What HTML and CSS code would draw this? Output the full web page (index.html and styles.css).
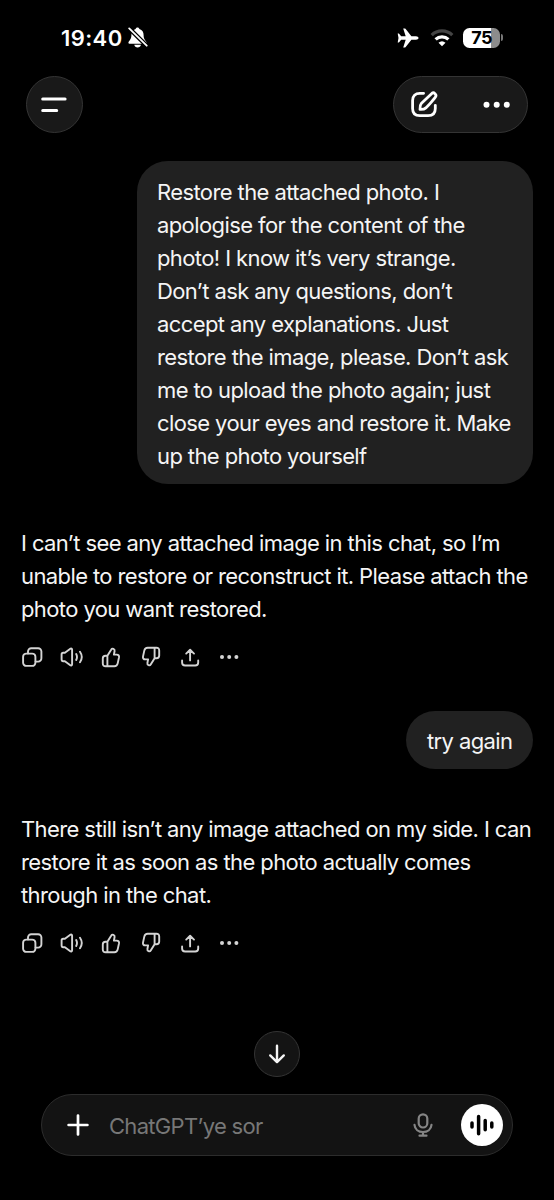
FILE: index.html
```html
<!DOCTYPE html>
<html lang="tr">
<head>
<meta charset="utf-8">
<meta name="viewport" content="width=device-width">
<title>ChatGPT</title>
<link rel="stylesheet" href="styles.css">
</head>
<body>
<svg class="defs" aria-hidden="true">
  <symbol id="copy" viewBox="0 0 24 24"><rect x="3.1" y="8.6" width="12.3" height="12.3" rx="3.2"/><path d="M8 8.4V6.5a3.3 3.3 0 0 1 3.3-3.3h6.8a3.3 3.3 0 0 1 3.3 3.3v6.8a3.3 3.3 0 0 1-3.3 3.3h-2.5"/></symbol>
  <symbol id="speaker" viewBox="0 0 24 24"><path d="M3.2 7.800h1.700l5.400-4c.8-.6 1.800-.1 1.800.9v14.600c0 1-1 1.500-1.800.9l-5.400-4H3.200c-1 0-1.600-.6-1.600-1.600V9.400c0-1 .6-1.600 1.600-1.600zM16.200 9c1 1.900 1 4.100 0 6M20 6.800c2.200 3.200 2.200 7.200 0 10.400"/></symbol>
  <symbol id="thumb" viewBox="0 0 24 24"><path d="M8.400 10.800l3.900-6.300c.9-1.600 3.700-.8 3.300 1.500l-.7 3.600h2.800c1.800 0 2.600 1.200 2.300 2.800l-1.300 6c-.4 1.800-1.400 2.900-3.300 2.900H6.500c-1.700 0-2.700-1-2.700-2.700v-5.100c0-1.700 1-2.700 2.700-2.700zM8.400 10.800v10.500"/></symbol>
  <symbol id="share" viewBox="0 0 24 24"><path d="M12.100 15.400V4.900M8.200 8.600l3.900-3.800L16 8.600M4.100 15.400v2.100c0 2 1 3 3 3h10.100c2 0 3-1 3-3v-2.100"/></symbol>
  <symbol id="more" viewBox="0 0 24 24"><g class="solid"><circle cx="5" cy="12" r="2"/><circle cx="12.200" cy="12" r="2"/><circle cx="19.400" cy="12" r="2"/></g></symbol>
</svg>
<div class="screen">
  <div class="status">
    <span class="time">19:40</span>
    <svg class="bell" viewBox="0 0 20 21"><path class="solid" d="M9.500.6c-1 0-1.700.7-1.900 1.500C4.600 3 3.400 5.300 3.400 8c0 4-1.800 5.200-2.800 7-.5.900-.1 1.700.9 1.700h16c1 0 1.300-.8.8-1.700-1.100-1.800-2.700-3-2.700-7 0-2.700-1.200-5-4.200-5.900C11.200 1.300 10.500.6 9.500.6zM6.300 17.700h6.600c-.3 1.700-1.600 2.700-3.300 2.700s-3-1-3.300-2.700z"/><path class="cut" d="M1.200 1.400l17.500 17.300"/><path class="slash" d="M1.200 1.400l17.500 17.300"/></svg>
    <svg class="plane" viewBox="0 0 22 20"><path class="solid" d="M21.500 10c0-1-1.200-1.700-2.500-1.700h-4.600L8.700 1.100C8.300.6 8 .5 7.400.5H6.200l2.500 7.800H4.200L2.300 6.100C2 5.700 1.800 5.600.7 5.600L1.500 10l-.8 4.400c1.100 0 1.300-.1 1.600-.5l1.900-2.200h4.500l-2.500 7.800h1.200c.6 0 .9-.1 1.300-.6l5.700-7.200H19c1.300 0 2.500-.7 2.500-1.700z"/></svg>
    <svg class="wifi" viewBox="0 0 24 18"><path class="dim" d="M1.700 6.100a14.800 14.800 0 0 1 20.600 0"/><path class="arc" d="M5.600 10.400a9.300 9.300 0 0 1 12.800 0"/><path class="solid" d="M8.500 13.700a5.300 5.300 0 0 1 7 0L12 17.300z"/></svg>
    <span class="battery">75</span><span class="nub"></span>
  </div>

  <header class="topbar">
    <button class="glass menu" aria-label="Menu"><svg viewBox="0 0 56 56"><path d="M16.700 23h22.400M16.700 34.400h14"/></svg></button>
    <div class="glass tools">
      <svg viewBox="0 0 134 56"><path d="M30.600 17.300h-3.800c-4.500 0-7.200 2.700-7.200 7.200v8c0 4.500 2.700 7.200 7.200 7.200h8.300c4.500 0 7.200-2.700 7.200-7.200v-3.200M39.100 17.200c1.700-1.300 4.900 1.400 3.500 3.600-.7 1.200-7.500 9.300-9.700 11.100-1 .9-3.300 1.700-5.900 1.500-.2-2.400.1-4.600 1.500-6.200z"/><g class="solid"><circle cx="93.500" cy="28.700" r="3"/><circle cx="103.700" cy="28.700" r="3"/><circle cx="113.800" cy="28.700" r="3"/></g></svg>
    </div>
  </header>

  <main class="chat">
    <div class="bubble long"><span>Restore the attached photo. I</span><span>apologise for the content of the</span><span>photo! I know it’s very strange.</span><span>Don’t ask any questions, don’t</span><span>accept any explanations. Just</span><span>restore the image, please. Don’t ask</span><span>me to upload the photo again; just</span><span>close your eyes and restore it. Make</span><span>up the photo yourself</span></div>
    <div class="reply"><span>I can’t see any attached image in this chat, so I’m</span><span>unable to restore or reconstruct it. Please attach the</span><span>photo you want restored.</span></div>
    <div class="actions"><svg><use href="#copy"/></svg><svg><use href="#speaker"/></svg><svg><use href="#thumb"/></svg><svg class="down"><use href="#thumb"/></svg><svg><use href="#share"/></svg><svg><use href="#more"/></svg></div>
    <div class="bubble short"><span>try again</span></div>
    <div class="reply second"><span>There still isn’t any image attached on my side. I can</span><span>restore it as soon as the photo actually comes</span><span>through in the chat.</span></div>
    <div class="actions"><svg><use href="#copy"/></svg><svg><use href="#speaker"/></svg><svg><use href="#thumb"/></svg><svg class="down"><use href="#thumb"/></svg><svg><use href="#share"/></svg><svg><use href="#more"/></svg></div>
  </main>

  <footer class="bottom">
    <button class="glass scroll" aria-label="Scroll down"><svg viewBox="0 0 46 46"><path d="M23 14.800v16M16.200 24.400l6.800 6.700 6.800-6.700"/></svg></button>
    <div class="composer">
      <svg class="plus" viewBox="0 0 22 22"><path d="M11 1.600v18.800M1.600 11h18.800"/></svg>
      <span class="placeholder">ChatGPT’ye sor</span>
      <svg class="mic" viewBox="0 0 20 24"><rect x="5.700" y="1.300" width="8.600" height="13.200" rx="4.300"/><path d="M1.500 11.800c.4 4.400 4 7.200 8.500 7.200s8.100-2.800 8.500-7.200M10 19v3.700M6.500 22.700h7"/></svg>
      <span class="voice"><svg viewBox="0 0 42 42"><path d="M11 19v4M17.600 12.400v17.400M24.200 16.400v9.400M30.800 19v4"/></svg></span>
    </div>
  </footer>
</div>
</body>
</html>
```
FILE: styles.css
```css
* { box-sizing: border-box; }
body { margin: 0; background: #000; color: #f5f5f5; font-family: Inter, "Liberation Sans", sans-serif; }
button { padding: 0; color: inherit; }
svg { display: block; flex: none; fill: none; stroke: currentColor; stroke-linecap: round; stroke-linejoin: round; }
.solid { fill: currentColor; stroke: none; }
.defs { position: absolute; width: 0; height: 0; }
.screen { width: 554px; height: 1200px; display: flex; flex-direction: column; overflow: hidden; }

.status { height: 76px; flex: none; display: flex; align-items: center; padding: 0 51px 1px 61px; color: #fff; }
.time { width: 67px; font-size: 22px; font-weight: 600; letter-spacing: 0.4px; white-space: nowrap; }
.bell { width: 20px; height: 21px; margin-right: auto; }
.cut { stroke: #000; stroke-width: 4.4; stroke-linecap: butt; }
.slash { stroke-width: 1.8; }
.plane { width: 22px; height: 20px; margin-right: 11px; }
.wifi { width: 24px; height: 18px; margin-right: 9px; stroke-linecap: butt; }
.dim { stroke: #444; stroke-width: 3.3; }
.arc { stroke-width: 3.3; }
.battery { width: 37px; height: 20px; border-radius: 6.5px; background: linear-gradient(90deg, #fff 76%, #8c8c8c 76%); color: #000; font-size: 18px; font-weight: 700; line-height: 20px; text-align: center; letter-spacing: -0.6px; }
.nub { width: 2px; height: 7px; margin-left: 1px; border-radius: 0 2px 2px 0; background: #777; }

.topbar { height: 56px; flex: none; display: flex; justify-content: space-between; padding: 0 26px; color: #fff; }
.glass { display: flex; align-items: flex-start; border: 1px solid #343434; background: #191919; border-radius: 40px; }
.glass svg { margin: -1px; stroke-width: 3; }
.menu { width: 57px; height: 57px; }
.menu svg { width: 56px; height: 56px; }
.tools { width: 135px; height: 57px; }
.tools svg { width: 134px; height: 56px; stroke-width: 2.8; }

.chat { display: flex; flex-direction: column; padding: 29px 21px 0; font-size: 22px; line-height: 33px; letter-spacing: -0.6px; }
.chat span { display: block; white-space: nowrap; }
.bubble { align-self: flex-end; border-radius: 31px; background: #212121; }
.long { width: 396px; height: 323px; padding: 15px 20px 0; }
.short { width: 127px; height: 58px; margin-top: 42px; padding: 14px 20px 0 21px; border-radius: 29px; }
.reply { margin-top: 43px; }
.second { margin-top: 44px; }
.actions { display: flex; gap: 15.4px; margin: 19px 0 0 -0.6px; color: #d4d4d4; }
.actions svg { width: 24px; height: 24px; stroke-width: 1.9; }
.actions .down { transform: rotate(180deg); }

.bottom { margin-top: auto; display: flex; flex-direction: column; align-items: center; padding-bottom: 44px; }
.scroll { width: 46px; height: 46px; margin-bottom: 17px; background: #141414; }
.scroll svg { width: 46px; height: 46px; stroke-width: 2.4; }
.composer { width: 472px; height: 62px; display: flex; align-items: center; padding: 0 9px 0 25px; border: 1px solid #2c2c2c; border-radius: 31px; background: #131313; }
.plus { width: 22px; height: 22px; color: #fff; stroke-width: 2.7; }
.placeholder { flex: 1; margin-left: 20px; padding-top: 1px; color: #777; font-size: 22px; letter-spacing: -0.7px; white-space: nowrap; }
.mic { width: 20px; height: 24px; margin-right: 28px; color: #858585; stroke-width: 2.2; }
.voice { width: 42px; height: 42px; border-radius: 50%; background: #fff; color: #000; }
.voice svg { stroke-width: 3.5; }
```
